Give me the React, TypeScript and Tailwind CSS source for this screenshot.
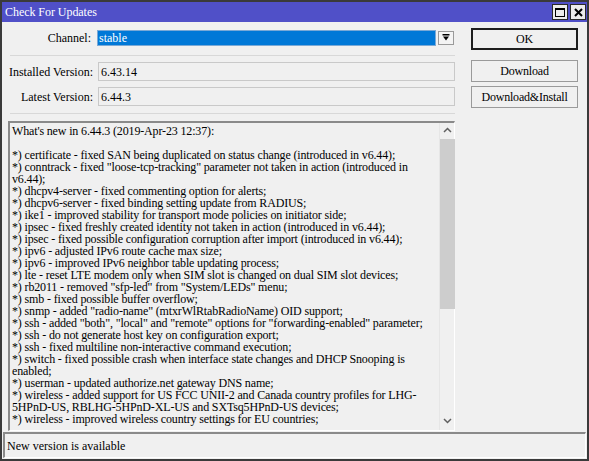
import React from "react";

const lines = [
  "What's new in 6.44.3 (2019-Apr-23 12:37):",
  "",
  "*) certificate - fixed SAN being duplicated on status change (introduced in v6.44);",
  "*) conntrack - fixed \"loose-tcp-tracking\" parameter not taken in action (introduced in",
  "v6.44);",
  "*) dhcpv4-server - fixed commenting option for alerts;",
  "*) dhcpv6-server - fixed binding setting update from RADIUS;",
  "*) ike1 - improved stability for transport mode policies on initiator side;",
  "*) ipsec - fixed freshly created identity not taken in action (introduced in v6.44);",
  "*) ipsec - fixed possible configuration corruption after import (introduced in v6.44);",
  "*) ipv6 - adjusted IPv6 route cache max size;",
  "*) ipv6 - improved IPv6 neighbor table updating process;",
  "*) lte - reset LTE modem only when SIM slot is changed on dual SIM slot devices;",
  "*) rb2011 - removed \"sfp-led\" from \"System/LEDs\" menu;",
  "*) smb - fixed possible buffer overflow;",
  "*) snmp - added \"radio-name\" (mtxrWlRtabRadioName) OID support;",
  "*) ssh - added \"both\", \"local\" and \"remote\" options for \"forwarding-enabled\" parameter;",
  "*) ssh - do not generate host key on configuration export;",
  "*) ssh - fixed multiline non-interactive command execution;",
  "*) switch - fixed possible crash when interface state changes and DHCP Snooping is",
  "enabled;",
  "*) userman - updated authorize.net gateway DNS name;",
  "*) wireless - added support for US FCC UNII-2 and Canada country profiles for LHG-",
  "5HPnD-US, RBLHG-5HPnD-XL-US and SXTsq5HPnD-US devices;",
  "*) wireless - improved wireless country settings for EU countries;",
];

const font = { fontFamily: '"Liberation Serif", "Times New Roman", serif' };

function Field({ label, value }: { label: string; value: string }) {
  return (
    <div className="flex items-center h-[19px]">
      <div className="w-[91px] text-right text-[12px] text-black leading-none whitespace-nowrap">
        {label}
      </div>
      <div className="ml-[5px] w-[357px] h-[19px] border border-[#c9c9c9] bg-[#f0f0f0] flex items-center pl-[2px] text-[12px] leading-none text-black">
        {value}
      </div>
    </div>
  );
}

function Btn({ children, def }: { children: React.ReactNode; def?: boolean }) {
  return (
    <div
      className={
        "w-[107px] h-[22px] flex items-center justify-center text-[12px] tracking-[-0.2px] leading-none text-black bg-[#f0f0f0] " +
        (def ? "border-2 border-[#1e1e1e]" : "border border-[#9a9a9a]")
      }
    >
      {children}
    </div>
  );
}

export default function App() {
  return (
    <div
      className="w-[589px] h-[461px] bg-[#f0f0f0] border-2 border-[#3a3a3a] flex flex-col overflow-hidden"
      style={font}
    >
      {/* Title bar */}
      <div className="h-[20px] bg-[#5050c8] flex items-center justify-between pl-[3px] pr-[1px]">
        <span className="text-white text-[12px] tracking-[-0.05px] leading-none">Check For Updates</span>
        <div className="flex gap-[2px]">
          <div className="w-[16px] h-[16px] bg-[#ececec] border border-[#2a2a2a] flex items-center justify-center">
            <div className="w-[10px] h-[9px] border border-black border-t-2" />
          </div>
          <div className="w-[16px] h-[16px] bg-[#ececec] border border-[#2a2a2a] flex items-center justify-center">
            <svg width="9" height="9" viewBox="0 0 9 9">
              <path d="M1 1 L8 8 M8 1 L1 8" stroke="#000" strokeWidth="2" />
            </svg>
          </div>
        </div>
      </div>

      <div className="flex flex-1 min-h-0">
        {/* left column */}
        <div className="w-[453px] flex flex-col">
          <div className="flex items-center h-[16px] mt-[8px]">
            <div className="w-[89px] text-right text-[12px] leading-none text-black">Channel:</div>
            <div className="ml-[6px] w-[339px] h-[16px] bg-[#0078d7] border border-[#7aa9d6] flex items-center pl-[1px]">
              <span className="text-white text-[12px] leading-none">stable</span>
            </div>
            <div className="ml-[2px] w-[16px] h-[14px] bg-[#f4f4f4] border border-[#9a9a9a] flex items-center justify-center">
              <svg width="8" height="8" viewBox="0 0 8 8">
                <path d="M0.5 0.75 H7.5" stroke="#000" strokeWidth="1.5" />
                <path d="M1 2.5 H7 L4 6.5 Z" fill="#000" />
              </svg>
            </div>
          </div>
          <div className="ml-[8px] mt-[9px] h-[1px] bg-[#d8d8d8]" />
          <div className="mt-[6px] flex flex-col gap-[6px]">
            <Field label="Installed Version:" value="6.43.14" />
            <Field label="Latest Version:" value="6.44.3" />
          </div>
          <div className="ml-[8px] mt-[7px] h-[1px] bg-[#d8d8d8]" />
          <div className="ml-[6px] mt-[7px] h-[310px] border-t-2 border-l-2 border-[#8a8a8a] border-r border-b border-r-white border-b-white bg-[#f0f0f0] flex">
            <div className="flex-1 min-w-0 pl-[2px] pt-[2px] text-[12px] tracking-[-0.15px] leading-[12px] text-black overflow-hidden">
              {lines.map((l, i) => (
                <div key={i} className="h-[12px] whitespace-nowrap">
                  {l || "\u00a0"}
                </div>
              ))}
            </div>
            <div className="w-[15px] flex flex-col items-center bg-[#f0f0f0] border-l border-[#e6e6e6]">
              <svg width="9" height="7" viewBox="0 0 9 7" className="mt-[4px]">
                <path d="M1 5 L4.5 1.5 L8 5" stroke="#606060" strokeWidth="1.5" fill="none" />
              </svg>
              <div className="mt-[5px] w-[15px] h-[170px] bg-[#cdcdcd]" />
              <div className="flex-1" />
              <svg width="9" height="7" viewBox="0 0 9 7" className="mb-[6px]">
                <path d="M1 2 L4.5 5.5 L8 2" stroke="#606060" strokeWidth="1.5" fill="none" />
              </svg>
            </div>
          </div>
        </div>
        {/* right column */}
        <div className="ml-[16px] mt-[6px] flex flex-col">
          <Btn def>OK</Btn>
          <div className="mt-[10px]">
            <Btn>Download</Btn>
          </div>
          <div className="mt-[4px]">
            <Btn>Download&amp;Install</Btn>
          </div>
        </div>
      </div>

      {/* status bar */}
      <div className="mx-[1px] mb-[1px] h-[26px] border-t-2 border-l-2 border-[#8a8a8a] border-r border-b border-r-white border-b-white flex items-center pl-[2px] text-[12px] leading-none text-black">
        New version is available
      </div>
    </div>
  );
}
